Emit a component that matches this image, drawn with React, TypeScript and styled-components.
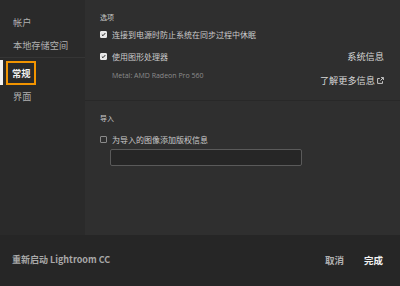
import styled, { createGlobalStyle } from "styled-components";

const GlobalStyle = createGlobalStyle`
  html, body {
    margin: 0;
    padding: 0;
    background: #262626;
  }
  body {
    font-family: "Noto Sans CJK SC", "Open Sans", sans-serif;
  }
`;

const Window = styled.div`
  width: 400px;
  height: 286px;
  display: grid;
  grid-template-rows: 235px 1fr;
  background: #262626;
  overflow: hidden;
`;

const Body = styled.div`
  display: grid;
  grid-template-columns: 85px 1fr;
`;

const Sidebar = styled.nav`
  background: #2a2a2a;
  display: flex;
  flex-direction: column;
  padding-top: 10px;
`;

const NavItem = styled.div<{ $active?: boolean }>`
  position: relative;
  height: 23px;
  display: flex;
  align-items: center;
  padding-left: 13px;
  font-size: 9.2px;
  color: ${(p) => (p.$active ? "#f0f0f0" : "#b0b0b0")};
  font-weight: ${(p) => (p.$active ? 700 : 400)};
`;

const ActiveMark = styled.span`
  position: absolute;
  left: 0;
  top: -1px;
  width: 3px;
  height: 25px;
  background: #f2f2f2;
`;

const FocusRing = styled.span`
  border: 2px solid #f29400;
  padding: 3px 4px;
  margin-left: -7px;
`;

const SidebarDivider = styled.div`
  height: 1px;
  background: #353535;
  margin: 1px 0 3px;
`;

const Main = styled.main`
  background: #2f2f2f;
  display: flex;
  flex-direction: column;
`;

const Section = styled.section`
  padding: 11px 16px 0 15px;
  display: flex;
  flex-direction: column;
`;

const OptionsSection = styled(Section)`
  box-sizing: border-box;
  height: 101px;
  border-bottom: 1px solid #282828;
`;

const SectionTitle = styled.div`
  font-size: 7px;
  color: #c8c8c8;
  height: 12px;
  line-height: 12px;
`;

const Row = styled.div<{ $height?: number; $gap?: number }>`
  display: flex;
  align-items: center;
  justify-content: space-between;
  height: ${(p) => p.$height ?? 22}px;
  margin-top: ${(p) => p.$gap ?? 0}px;
`;

const CheckLabel = styled.label`
  display: flex;
  align-items: center;
  gap: 5px;
  font-size: 8px;
  color: #cacaca;
`;

const Box = styled.span<{ $checked?: boolean }>`
  width: 7px;
  height: 7px;
  box-sizing: border-box;
  border-radius: 1px;
  border: 1px solid ${(p) => (p.$checked ? "#e8e8e8" : "#8a8a8a")};
  background: ${(p) => (p.$checked ? "#e8e8e8" : "transparent")};
  display: flex;
  align-items: center;
  justify-content: center;
`;

const SideLink = styled.span<{ $drop?: number }>`
  font-size: 9.2px;
  color: #d8d8d8;
  display: flex;
  align-items: center;
  gap: 2px;
  line-height: 14px;
  align-self: flex-start;
  margin-top: ${(p) => p.$drop ?? 4}px;
`;

const Sub = styled.div`
  font-family: "Open Sans", sans-serif;
  font-size: 7px;
  line-height: 10px;
  color: #8c8c8c;
  padding-left: 12px;
  align-self: flex-start;
  margin-top: 4px;
`;

const TextField = styled.div`
  margin: 1px 0 0 10px;
  width: 192px;
  height: 17px;
  box-sizing: border-box;
  border: 1px solid #5a5a5a;
  border-radius: 2px;
  background: #262626;
`;

const Footer = styled.footer`
  display: flex;
  align-items: center;
  padding: 0 17px 2px 12px;
`;

const Restart = styled.span`
  font-size: 9px;
  color: #a8a8a8;
  font-weight: 700;
  flex: 1;
`;

const FooterButton = styled.span<{ $primary?: boolean }>`
  font-size: 9.5px;
  font-weight: 700;
  color: ${(p) => (p.$primary ? "#f2f2f2" : "#b0b0b0")};
  margin-left: ${(p) => (p.$primary ? "20px" : "0")};
`;

const Check = () => (
  <svg width="7" height="7" viewBox="0 0 7 7">
    <path d="M1.2 3.6 L2.8 5.2 L5.9 1.6" fill="none" stroke="#1e1e1e" strokeWidth="1.4" />
  </svg>
);

const ExternalIcon = () => (
  <svg width="7" height="7" viewBox="0 0 7 7">
    <path d="M4 0.6 H6.4 V3 M6.4 0.6 L3.4 3.6 M5.5 4.2 V6.4 H0.6 V1.5 H2.8" fill="none" stroke="#d8d8d8" strokeWidth="0.9" />
  </svg>
);

export default function App() {
  return (
    <>
      <GlobalStyle />
      <Window>
        <Body>
          <Sidebar>
            <NavItem>帐户</NavItem>
            <NavItem>本地存储空间</NavItem>
            <SidebarDivider />
            <NavItem $active>
              <ActiveMark />
              <FocusRing>常规</FocusRing>
            </NavItem>
            <NavItem>界面</NavItem>
          </Sidebar>
          <Main>
            <OptionsSection>
              <SectionTitle>选项</SectionTitle>
              <Row>
                <CheckLabel>
                  <Box $checked>
                    <Check />
                  </Box>
                  连接到电源时防止系统在同步过程中休眠
                </CheckLabel>
              </Row>
              <Row>
                <CheckLabel>
                  <Box $checked>
                    <Check />
                  </Box>
                  使用图形处理器
                </CheckLabel>
                <SideLink $drop={4}>系统信息</SideLink>
              </Row>
              <Row $height={26}>
                <Sub>Metal: AMD Radeon Pro 560</Sub>
                <SideLink $drop={6}>
                  了解更多信息
                  <ExternalIcon />
                </SideLink>
              </Row>
            </OptionsSection>
            <Section>
              <SectionTitle>导入</SectionTitle>
              <Row $height={18} $gap={6}>
                <CheckLabel>
                  <Box />
                  为导入的图像添加版权信息
                </CheckLabel>
              </Row>
              <TextField />
            </Section>
          </Main>
        </Body>
        <Footer>
          <Restart>重新启动 Lightroom CC</Restart>
          <FooterButton>取消</FooterButton>
          <FooterButton $primary>完成</FooterButton>
        </Footer>
      </Window>
    </>
  );
}
